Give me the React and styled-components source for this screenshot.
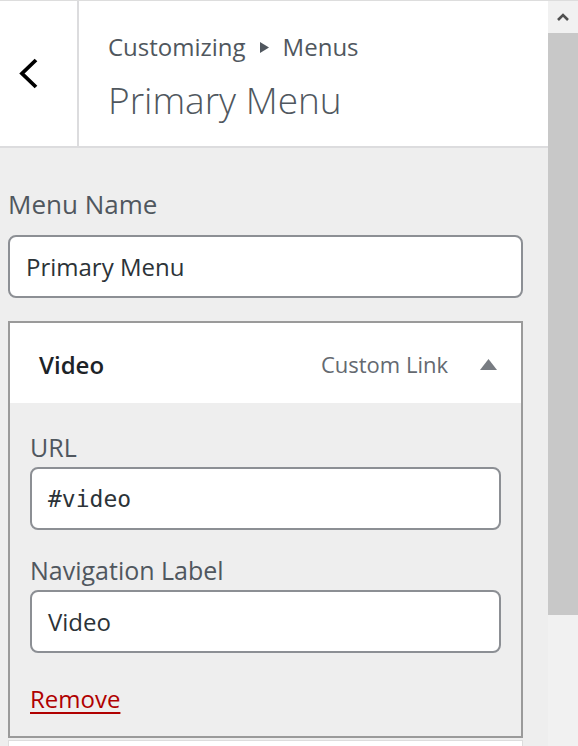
import React from 'react';
import styled, { createGlobalStyle } from 'styled-components';

const GlobalStyle = createGlobalStyle`
  html, body {
    margin: 0;
    padding: 0;
    height: 746px;
    overflow: hidden;
    background: #eeeeee;
    font-family: 'Open Sans', 'Noto Sans', sans-serif;
  }
`;

const Frame = styled.div`
  display: flex;
  width: 578px;
  height: 746px;
  border-top: 1px solid #dddddd;
  box-sizing: border-box;
`;

const Pane = styled.div`
  width: 548px;
  flex: none;
  background: #eeeeee;
  overflow: hidden;
`;

const Header = styled.header`
  display: flex;
  height: 147px;
  background: #ffffff;
  border-bottom: 2px solid #dcdcde;
  box-sizing: border-box;
`;

const BackButton = styled.button`
  width: 79px;
  flex: none;
  display: flex;
  align-items: center;
  justify-content: flex-start;
  padding: 0 0 0 19px;
  border: none;
  border-right: 2px solid #dcdcde;
  background: #ffffff;
  box-sizing: border-box;
  cursor: pointer;
`;

const Titles = styled.div`
  padding: 29px 0 0 29px;
`;

const Crumb = styled.div`
  display: flex;
  align-items: center;
  gap: 14px;
  font-size: 24px;
  line-height: 34px;
  color: #50575e;
`;

const Title = styled.h1`
  margin: 13px 0 0;
  font-size: 37px;
  line-height: 46px;
  font-weight: 300;
  color: #50575e;
`;

const Body = styled.div`
  padding: 39px 25px 0 8px;
`;

const Label = styled.label`
  display: block;
  font-size: ${(p) => p.size || 25}px;
  line-height: 35px;
  color: #50575e;
  margin-top: ${(p) => p.gap || 0}px;
  margin-bottom: ${(p) => p.below || 2}px;
`;

const Input = styled.div`
  height: 63px;
  display: flex;
  align-items: center;
  padding: 0 16px;
  background: #ffffff;
  border: 2px solid #8c8f94;
  border-radius: 8px;
  box-sizing: border-box;
  font-family: ${(p) => (p.mono ? "'DejaVu Sans Mono', 'Liberation Mono', monospace" : "'Open Sans', 'Noto Sans', sans-serif")};
  font-size: ${(p) => (p.mono ? 23 : 24)}px;
  color: #2c3338;
`;

const Item = styled.div`
  margin-top: 23px;
  border: 2px solid #9a9a9a;
`;

const ItemHead = styled.div`
  height: 80px;
  display: flex;
  align-items: center;
  padding: 2px 24px 0 29px;
  box-sizing: border-box;
  background: #ffffff;
`;

const ItemTitle = styled.div`
  flex: 1;
  font-size: 24px;
  font-weight: 600;
  color: #1d2327;
`;

const ItemType = styled.div`
  font-size: 22px;
  color: #646970;
  margin-right: 32px;
`;

const Settings = styled.div`
  padding: 27px 20px 20px;
  background: #eeeeee;
`;

const RemoveLink = styled.a`
  display: inline-block;
  margin-top: 29px;
  font-size: 24px;
  line-height: 34px;
  color: #b00000;
  text-decoration: underline;
  text-underline-offset: 4px;
`;

const NextItem = styled.div`
  margin-top: 2px;
  height: 40px;
  background: #ffffff;
  border: 1px solid #dddddd;
`;

const Scrollbar = styled.div`
  width: 30px;
  flex: none;
  display: flex;
  flex-direction: column;
  background: #f1f1f1;
`;

const ScrollButton = styled.div`
  height: 32px;
  display: flex;
  align-items: center;
  justify-content: center;
`;

const Thumb = styled.div`
  height: 582px;
  background: #c8c8c8;
`;

const App = () => (
  <>
    <GlobalStyle />
    <Frame>
      <Pane>
        <Header>
          <BackButton aria-label="Back">
            <svg width="20" height="32" viewBox="0 0 20 32">
              <polyline points="17,2 3,15.5 17,29" fill="none" stroke="#000" strokeWidth="3.8" />
            </svg>
          </BackButton>
          <Titles>
            <Crumb>
              <span>Customizing</span>
              <svg width="9" height="11" viewBox="0 0 9 11">
                <polygon points="0,0 9,5.5 0,11" fill="#50575e" />
              </svg>
              <span>Menus</span>
            </Crumb>
            <Title>Primary Menu</Title>
          </Titles>
        </Header>
        <Body>
          <Label size={26} below={13}>Menu Name</Label>
          <Input>Primary Menu</Input>
          <Item>
            <ItemHead>
              <ItemTitle>Video</ItemTitle>
              <ItemType>Custom Link</ItemType>
              <svg width="17" height="11" viewBox="0 0 17 11">
                <polygon points="8.5,0 17,11 0,11" fill="#787c82" />
              </svg>
            </ItemHead>
            <Settings>
              <Label>URL</Label>
              <Input mono>#video</Input>
              <Label gap={23}>Navigation Label</Label>
              <Input>Video</Input>
              <RemoveLink href="#">Remove</RemoveLink>
            </Settings>
          </Item>
          <NextItem />
        </Body>
      </Pane>
      <Scrollbar>
        <ScrollButton>
          <svg width="12" height="10" viewBox="0 0 12 10">
            <polyline points="1,8 6,3 11,8" fill="none" stroke="#505050" strokeWidth="2.6" />
          </svg>
        </ScrollButton>
        <Thumb />
      </Scrollbar>
    </Frame>
  </>
);

export default App;
